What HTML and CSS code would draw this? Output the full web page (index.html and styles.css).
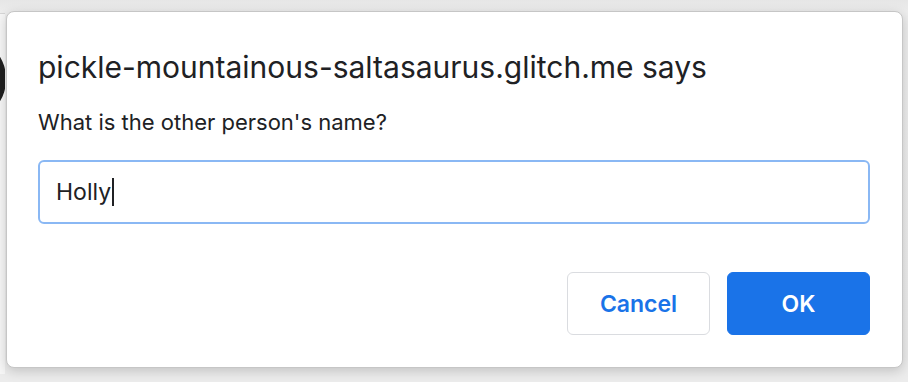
FILE: index.html
```html
<!DOCTYPE html>
<html>
<head>
<meta charset="utf-8">
<link rel="stylesheet" href="styles.css">
</head>
<body>
<div class="page">
  <div class="page-content">
    <div class="ring"></div>
  </div>
</div>
<div class="dialog">
  <div class="title">pickle-mountainous-saltasaurus.glitch.me says</div>
  <div class="message">What is the other person's name?</div>
  <div class="field"><span class="value">Holly</span><span class="caret"></span></div>
  <div class="actions">
    <button class="btn btn-cancel">Cancel</button>
    <button class="btn btn-ok">OK</button>
  </div>
</div>
</body>
</html>
```

FILE: styles.css
```css
html, body {
  margin: 0;
  padding: 0;
  width: 908px;
  height: 382px;
  overflow: hidden;
  background: #ebebeb;
  font-family: Inter, "Liberation Sans", Arial, sans-serif;
  color: #202124;
}

.page {
  position: relative;
  width: 908px;
  height: 382px;
  background: linear-gradient(#e6e6e6, #ededed 12px, #ececec);
}

.page-content {
  position: absolute;
  left: 0;
  top: 13px;
  width: 5px;
  height: 360px;
  background: #f6f6f6;
  border-top: 1px solid #d6d6d6;
  overflow: hidden;
}

.ring {
  position: absolute;
  left: -46px;
  top: 30px;
  width: 40px;
  height: 58px;
  border: 6px solid #1f1f1f;
  border-radius: 50%;
}

.dialog {
  position: absolute;
  left: 6px;
  top: 11px;
  width: 897px;
  height: 357px;
  background: #fff;
  border: 1px solid #c6c6c6;
  border-radius: 8px;
  box-shadow: 0 3px 12px rgba(0, 0, 0, 0.18);
  padding: 0 32px 0 31px;
  box-sizing: border-box;
  display: flex;
  flex-direction: column;
}

.title {
  font-size: 30px;
  line-height: 34px;
  margin-top: 38px;
  white-space: nowrap;
}

.message {
  font-size: 22px;
  line-height: 26px;
  margin-top: 25px;
  white-space: nowrap;
}

.field {
  margin-top: 25px;
  height: 64px;
  border: 2px solid #8ab8f4;
  border-radius: 6px;
  box-sizing: border-box;
  display: flex;
  align-items: center;
  padding-left: 16px;
  font-size: 23px;
}

.caret {
  display: inline-block;
  width: 2px;
  height: 28px;
  background: #202124;
  margin-left: 1px;
}

.actions {
  margin-top: 48px;
  display: flex;
  justify-content: flex-end;
  gap: 17px;
}

.btn {
  width: 143px;
  height: 63px;
  border-radius: 6px;
  font-family: Inter, "Liberation Sans", Arial, sans-serif;
  font-size: 23px;
  font-weight: 600;
  padding: 0;
  box-sizing: border-box;
}

.btn-cancel {
  background: #fff;
  border: 1px solid #dadce0;
  color: #1a73e8;
}

.btn-ok {
  background: #1a73e8;
  border: 1px solid #1a73e8;
  color: #fff;
}
```
